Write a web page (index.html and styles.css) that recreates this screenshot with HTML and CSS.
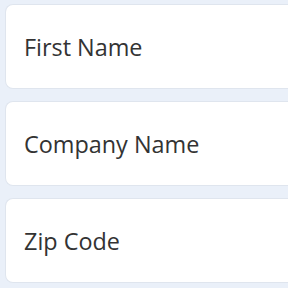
FILE: index.html
```html
<!DOCTYPE html>
<html lang="en">

<head>
  <meta charset="UTF-8">
  <meta name="viewport" content="width=device-width, initial-scale=1.0">
  <title>Form</title>
  <link rel="stylesheet" href="styles.css">
</head>

<body>
  <div class="fields">
    <div class="field">First Name</div>
    <div class="field">Company Name</div>
    <div class="field">Zip Code</div>
  </div>
</body>

</html>
```

FILE: styles.css
```css
body {
  margin: 0;
  padding: 0;
  background-color: #eaf0f9;
  font-family: "Open Sans", Arial, sans-serif;
  overflow: hidden;
}

.fields {
  display: flex;
  flex-direction: column;
  gap: 12px;
  padding: 4px 0 0 5px;
}

/* the cards run on past the right edge of the window */
.field {
  box-sizing: border-box;
  height: 85px;
  display: flex;
  align-items: center;
  padding-left: 18px;
  background-color: #fff;
  border: 1px solid #dfe5ee;
  border-right: none;
  border-radius: 8px 0 0 8px;
  font-size: 23.4px;
  color: #333;
}
```
